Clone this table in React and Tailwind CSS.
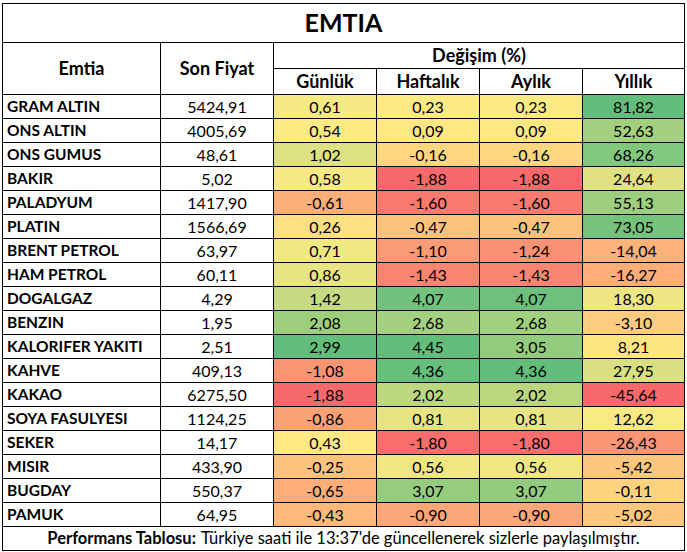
import React from "react";

const rows = [
  ["GRAM ALTIN", "5424,91", 0.61, 0.23, 0.23, 81.82],
  ["ONS ALTIN", "4005,69", 0.54, 0.09, 0.09, 52.63],
  ["ONS GUMUS", "48,61", 1.02, -0.16, -0.16, 68.26],
  ["BAKIR", "5,02", 0.58, -1.88, -1.88, 24.64],
  ["PALADYUM", "1417,90", -0.61, -1.6, -1.6, 55.13],
  ["PLATIN", "1566,69", 0.26, -0.47, -0.47, 73.05],
  ["BRENT PETROL", "63,97", 0.71, -1.1, -1.24, -14.04],
  ["HAM PETROL", "60,11", 0.86, -1.43, -1.43, -16.27],
  ["DOGALGAZ", "4,29", 1.42, 4.07, 4.07, 18.3],
  ["BENZIN", "1,95", 2.08, 2.68, 2.68, -3.1],
  ["KALORIFER YAKITI", "2,51", 2.99, 4.45, 3.05, 8.21],
  ["KAHVE", "409,13", -1.08, 4.36, 4.36, 27.95],
  ["KAKAO", "6275,50", -1.88, 2.02, 2.02, -45.64],
  ["SOYA FASULYESI", "1124,25", -0.86, 0.81, 0.81, 12.62],
  ["SEKER", "14,17", 0.43, -1.8, -1.8, -26.43],
  ["MISIR", "433,90", -0.25, 0.56, 0.56, -5.42],
  ["BUGDAY", "550,37", -0.65, 3.07, 3.07, -0.11],
  ["PAMUK", "64,95", -0.43, -0.9, -0.9, -5.02],
];

const RED = [248, 105, 107];
const YEL = [255, 235, 132];
const GRN = [99, 190, 123];

function stats(idx) {
  const vals = rows.map((r) => r[idx]).sort((a, b) => a - b);
  const n = vals.length;
  const rank = 0.5 * (n - 1);
  const lo = Math.floor(rank);
  const mid = vals[lo] + (vals[lo + 1] - vals[lo]) * (rank - lo);
  return { min: vals[0], mid, max: vals[n - 1] };
}

const colStats = [2, 3, 4, 5].map(stats);

function scale(v, s) {
  let c;
  if (v <= s.mid) {
    const t = (v - s.min) / (s.mid - s.min);
    c = RED.map((r, i) => Math.round(r + (YEL[i] - r) * t));
  } else {
    const t = (v - s.mid) / (s.max - s.mid);
    c = YEL.map((y, i) => Math.round(y + (GRN[i] - y) * t));
  }
  return `rgb(${c.join(",")})`;
}

const fmt = (v) => v.toFixed(2).replace(".", ",");

export default function App() {
  return (
    <div className="bg-white w-[687px] h-[552px] pt-[3px] pl-[2px]" style={{ fontFamily: "Lato, 'Liberation Sans', sans-serif" }}>
      <div className="grid w-[683px] bg-black p-px gap-px grid-cols-[157px_112px_102px_102px_102px_101px] grid-rows-[38px_25px_25px_repeat(18,23px)_23px] text-black">
        <div className="col-span-6 bg-white flex items-center justify-center text-[25px] font-bold">
          EMTIA
        </div>
        <div className="row-span-2 bg-white flex items-center justify-center text-[18px] font-bold">
          Emtia
        </div>
        <div className="row-span-2 bg-white flex items-center justify-center text-[18px] font-bold">
          Son Fiyat
        </div>
        <div className="col-span-4 bg-white flex items-center justify-center text-[18px] font-bold">
          Değişim (%)
        </div>
        <div className="bg-white flex items-center justify-center text-[18px] font-bold">Günlük</div>
        <div className="bg-white flex items-center justify-center text-[18px] font-bold">Haftalık</div>
        <div className="bg-white flex items-center justify-center text-[18px] font-bold">Aylık</div>
        <div className="bg-white flex items-center justify-center text-[18px] font-bold">Yıllık</div>
        {rows.map((r) => (
          <React.Fragment key={r[0]}>
            <div className="bg-white flex items-center pl-[4px] text-[15.5px] font-bold whitespace-nowrap">
              {r[0]}
            </div>
            <div className="bg-white flex items-center justify-center text-[16px]">{r[1]}</div>
            {[2, 3, 4, 5].map((i, k) => (
              <div
                key={i}
                className="flex items-center justify-center text-[16px]"
                style={{ backgroundColor: scale(r[i], colStats[k]) }}
              >
                {fmt(r[i])}
              </div>
            ))}
          </React.Fragment>
        ))}
        <div className="col-span-6 bg-white flex items-center justify-center text-[16.5px] whitespace-nowrap">
          <span className="font-bold mr-[5px]">Performans Tablosu:</span>
          <span>Türkiye saati ile 13:37'de güncellenerek sizlerle paylaşılmıştır.</span>
        </div>
      </div>
    </div>
  );
}
